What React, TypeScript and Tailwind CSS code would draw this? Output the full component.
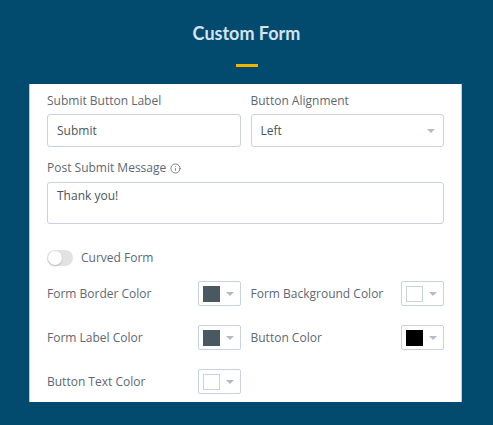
import { Info } from "lucide-react";

function Caret() {
  return <span className="block w-0 h-0 border-l-[4px] border-r-[4px] border-t-[4px] border-l-transparent border-r-transparent border-t-[#b3bcc6]" />;
}

function Swatch({ color }: { color: string }) {
  const white = color === "#ffffff";
  return <div className="w-[43px] h-[25px] border border-[#c8d1e0] rounded-[2px] flex items-center pl-[4px] pr-[6px] gap-[6px] bg-white">
      <span className={`w-[21px] h-[16px] ${white ? "border border-[#c8d1e0]" : ""}`} style={{ backgroundColor: color }} />
      <Caret />
    </div>;
}

function ColorField({ label, color }: { label: string; color: string }) {
  return <div className="flex items-center justify-between">
      <span className="text-[12px] leading-[16px] text-[#5d6873]">{label}</span>
      <Swatch color={color} />
    </div>;
}

export default function App() {
  return <div className="w-[493px] h-[425px] bg-[#034a6f] pt-[22px] overflow-hidden" style={{ fontFamily: "'Open Sans', sans-serif" }}>
      <h1 className="text-center text-[18px] font-bold leading-[22px] text-[#d3e3ee]" style={{ fontFamily: "Lato, sans-serif" }}>Custom Form</h1>
      <div className="mx-auto mt-[20px] h-[3px] w-[22px] bg-[#f2b400]" />
      <div className="ml-[29px] mt-[17px] w-[433px] h-[318px] bg-white px-[17px] pt-[9px] border-x border-[#b9c9d6]">
        <div className="grid grid-cols-2 gap-x-[10px]">
          <div>
            <div className="text-[12px] leading-[16px] text-[#5d6873] mb-[5px]">Submit Button Label</div>
            <div className="h-[33px] border border-[#c8d1e0] rounded-[3px] flex items-center pl-[9px] text-[12px] text-[#4a5560]">Submit</div>
          </div>
          <div>
            <div className="text-[12px] leading-[16px] text-[#5d6873] mb-[5px]">Button Alignment</div>
            <div className="h-[33px] border border-[#c8d1e0] rounded-[3px] flex items-center justify-between pl-[9px] pr-[8px] text-[12px] text-[#4a5560]">
              <span>Left</span>
              <Caret />
            </div>
          </div>
        </div>
        <div className="mt-[13px] flex items-center gap-[4px] text-[12px] leading-[16px] text-[#5d6873] mb-[6px]">
          Post Submit Message
          <Info className="w-[11px] h-[11px] text-[#5d6873]" strokeWidth={1.75} />
        </div>
        <div className="h-[42px] border border-[#c8d1e0] rounded-[3px] pl-[9px] pt-[5px] text-[12px] leading-[16px] text-[#4a5560]">Thank you!</div>
        <div className="mt-[26px] flex items-center gap-[8px]">
          <div className="w-[26px] h-[16px] rounded-full bg-[#e2e2e2] relative">
            <span className="absolute left-[1px] top-[1px] w-[14px] h-[14px] rounded-full bg-white shadow-[0_1px_2px_rgba(0,0,0,0.2)]" />
          </div>
          <span className="text-[12px] leading-[16px] text-[#5d6873]">Curved Form</span>
        </div>
        <div className="mt-[15px] grid grid-cols-2 gap-x-[10px] gap-y-[19px]">
          <ColorField label="Form Border Color" color="#4a5861" />
          <ColorField label="Form Background Color" color="#ffffff" />
          <ColorField label="Form Label Color" color="#4a5861" />
          <ColorField label="Button Color" color="#000000" />
          <ColorField label="Button Text Color" color="#ffffff" />
        </div>
      </div>
    </div>;
}
